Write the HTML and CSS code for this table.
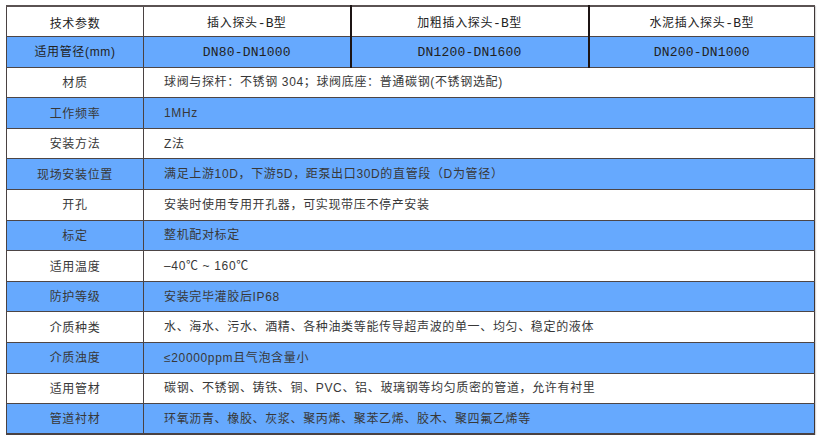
FILE: index.html
```html
<!DOCTYPE html>
<html lang="zh">
<head>
<meta charset="utf-8">
<title>技术参数</title>
<link rel="stylesheet" href="styles.css">
</head>
<body>
<div class="wrap">
<table class="spec">
  <colgroup>
    <col class="c1"><col class="c2"><col class="c3"><col class="c4">
  </colgroup>
  <tr class="white head first">
    <td class="label">技术参数</td>
    <td class="prod">插入探头<span class="m">-B</span>型</td>
    <td class="prod dark">加粗插入探头<span class="m">-B</span>型</td>
    <td class="prod dark">水泥插入探头<span class="m">-B</span>型</td>
  </tr>
  <tr class="blue head">
    <td class="label">适用管径(mm)</td>
    <td class="prod m">DN80-DN1000</td>
    <td class="prod m dark">DN1200-DN1600</td>
    <td class="prod m dark">DN200-DN1000</td>
  </tr>
  <tr class="white">
    <td class="label">材质</td>
    <td class="val" colspan="3">球阀与探杆：不锈钢 304；球阀底座：普通碳钢(不锈钢选配)</td>
  </tr>
  <tr class="blue">
    <td class="label">工作频率</td>
    <td class="val" colspan="3">1MHz</td>
  </tr>
  <tr class="white">
    <td class="label">安装方法</td>
    <td class="val" colspan="3">Z法</td>
  </tr>
  <tr class="blue">
    <td class="label">现场安装位置</td>
    <td class="val" colspan="3">满足上游10D，下游5D，距泵出口30D的直管段（D为管径）</td>
  </tr>
  <tr class="white">
    <td class="label">开孔</td>
    <td class="val" colspan="3">安装时使用专用开孔器，可实现带压不停产安装</td>
  </tr>
  <tr class="blue">
    <td class="label">标定</td>
    <td class="val" colspan="3">整机配对标定</td>
  </tr>
  <tr class="white">
    <td class="label">适用温度</td>
    <td class="val" colspan="3">–40℃ ~ 160℃</td>
  </tr>
  <tr class="blue">
    <td class="label">防护等级</td>
    <td class="val" colspan="3">安装完毕灌胶后IP68</td>
  </tr>
  <tr class="white">
    <td class="label">介质种类</td>
    <td class="val" colspan="3">水、海水、污水、酒精、各种油类等能传导超声波的单一、均匀、稳定的液体</td>
  </tr>
  <tr class="blue">
    <td class="label">介质浊度</td>
    <td class="val" colspan="3">≤20000ppm且气泡含量小</td>
  </tr>
  <tr class="white">
    <td class="label">适用管材</td>
    <td class="val" colspan="3">碳钢、不锈钢、铸铁、铜、PVC、铝、玻璃钢等均匀质密的管道，允许有衬里</td>
  </tr>
  <tr class="blue">
    <td class="label">管道衬材</td>
    <td class="val" colspan="3">环氧沥青、橡胶、灰浆、聚丙烯、聚苯乙烯、胶木、聚四氟乙烯等</td>
  </tr>
</table>
</div>
</body>
</html>
```

FILE: styles.css
```css
html, body {
  margin: 0;
  padding: 0;
  background: #ffffff;
}

.wrap {
  padding: 5px 0 0 6px;
}

.spec {
  border-collapse: collapse;
  table-layout: fixed;
  width: 809px;
  font-family: "Liberation Sans", "Noto Sans CJK SC", sans-serif;
  font-size: 12px;
  letter-spacing: 0.65px;
  color: #383838;
  border-top: 2px solid #5a5252;
  border-left: 1px solid #3e3636;
  border-right: 1px solid #3e3636;
  border-bottom: 2px solid #4a4242;
  box-shadow: 1px 1px 1px rgba(0,0,0,0.15);
}

.c1 { width: 137px; }
.c2 { width: 207px; }
.c3 { width: 238px; }
.c4 { width: 226px; }

.spec tr {
  height: 30.6px;
}

.spec td {
  border-top: 1px solid #4d4545;
  border-bottom: 1px solid #4d4545;
  border-left: 1px solid #4a4242;
  padding: 0;
  line-height: 16px;
  white-space: nowrap;
  vertical-align: middle;
}

.spec td.dark {
  border-left: 2px solid #1c1414;
}

.white td { background: #ffffff; }
.blue td { background: #66a9fe; }

.label {
  text-align: center;
  padding-top: 1px !important;
}

.prod {
  text-align: center;
  color: #222222;
  padding-top: 2px !important;
}

.first td {
  padding-top: 4px !important;
}

.head .label { color: #222222; }

.m {
  font-family: "Liberation Mono", "Noto Sans CJK SC", monospace;
  font-size: 13px;
  letter-spacing: 0.2px;
}

.val {
  text-align: left;
  padding-left: 20px !important;
}
```
